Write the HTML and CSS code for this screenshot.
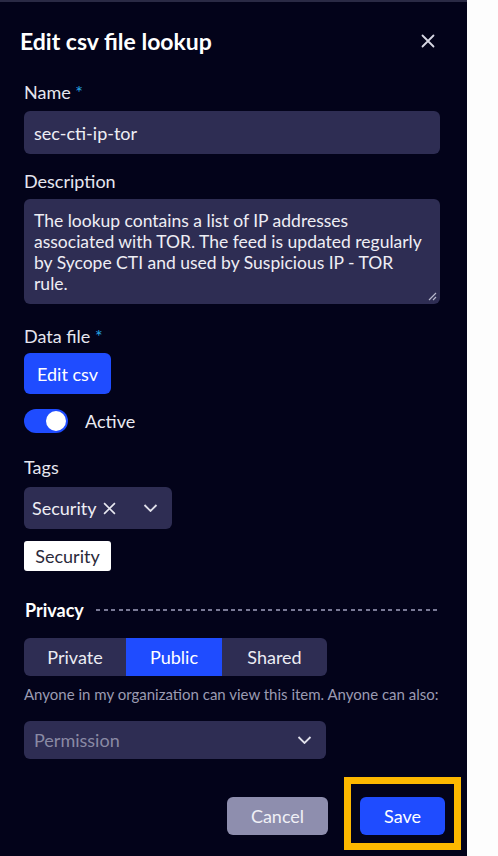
FILE: index.html
```html
<!DOCTYPE html>
<html lang="en">
<head>
<meta charset="utf-8">
<title>Edit csv file lookup</title>
<link rel="stylesheet" href="styles.css">
</head>
<body>
<div class="page">
  <section class="panel">
    <header class="head">
      <h1 class="title">Edit csv file lookup</h1>
      <button class="close" aria-label="Close">
        <svg width="14" height="14" viewBox="0 0 14 14"><path d="M1.5 1.5 L12.5 12.5 M12.5 1.5 L1.5 12.5" stroke="#d8d8e4" stroke-width="1.8" stroke-linecap="round"/></svg>
      </button>
    </header>

    <label class="label l-name">Name <span class="req">*</span></label>
    <div class="input name-input">sec-cti-ip-tor</div>

    <label class="label l-desc">Description</label>
    <div class="input textarea">The lookup contains a list of IP addresses<br>associated with TOR. The feed is updated regularly<br>by Sycope CTI and used by Suspicious IP - TOR<br>rule.
      <svg class="grip" width="10" height="10" viewBox="0 0 10 10"><path d="M9 2 L2 9 M9 6 L6 9" stroke="#b8b8cc" stroke-width="1.2"/></svg>
    </div>

    <label class="label l-data">Data file <span class="req">*</span></label>
    <button class="btn btn-blue edit-csv">Edit csv</button>

    <div class="toggle-row">
      <span class="toggle"><span class="knob"></span></span>
      <span class="toggle-text">Active</span>
    </div>

    <label class="label l-tags">Tags</label>
    <div class="input tag-select">
      <span class="tag-val">Security</span>
      <svg class="tag-x" width="13" height="13" viewBox="0 0 12 12"><path d="M1 1 L11 11 M11 1 L1 11" stroke="#e8e8f0" stroke-width="1.5"/></svg>
      <svg class="chev" width="15" height="8" viewBox="0 0 14 8"><path d="M1 1 L7 7 L13 1" fill="none" stroke="#e0e0ea" stroke-width="1.8"/></svg>
    </div>
    <div class="chip">Security</div>

    <div class="privacy">
      <span class="privacy-title">Privacy</span>
      <span class="dash"></span>
    </div>

    <div class="seg">
      <span class="seg-item s-private">Private</span>
      <span class="seg-item s-public active">Public</span>
      <span class="seg-item s-shared">Shared</span>
    </div>

    <p class="hint">Anyone in my organization can view this item. Anyone can also:</p>

    <div class="input perm">
      <span class="placeholder">Permission</span>
      <svg class="chev" width="15" height="8" viewBox="0 0 14 8"><path d="M1 1 L7 7 L13 1" fill="none" stroke="#e0e0ea" stroke-width="1.8"/></svg>
    </div>

    <footer class="foot">
      <button class="btn btn-cancel">Cancel</button>
      <button class="btn btn-blue btn-save">Save</button>
      <span class="highlight"></span>
    </footer>
  </section>
</div>
</body>
</html>
```

FILE: styles.css
```css
* { box-sizing: border-box; }
html, body { margin: 0; padding: 0; background: #fdfdfd; }
body { font-family: Lato, "Noto Sans", "Liberation Sans", sans-serif; color: #e9e9f2; }

.page { width: 498px; height: 856px; }

.panel {
  width: 467px;
  height: 856px;
  background: #03031a;
  border-top: 2px solid #2a2a45;
  padding: 26px 27px 0 24px;
  display: flex;
  flex-direction: column;
  align-items: flex-start;
}

.head {
  width: 420px;
  margin-left: -4px;
  display: flex;
  align-items: center;
  justify-content: space-between;
  height: 26px;
}
.title {
  margin: 0;
  font-size: 23px;
  line-height: 26px;
  font-weight: 700;
  color: #ffffff;
}
.close {
  background: none; border: 0; padding: 0; margin-right: 5px;
  width: 14px; height: 14px; display: flex;
}

.label {
  font-size: 18px;
  line-height: 20px;
  color: #e6e6ef;
  display: block;
}
.req { color: #27a7e4; }
.l-name { margin-top: 28px; }
.l-desc { margin-top: 17px; }
.l-data { margin-top: 22px; }
.l-tags { margin-top: 24px; }

.input {
  background: #2e2d53;
  border-radius: 6px;
  font-size: 18px;
  color: #eeeef5;
}
.name-input {
  margin-top: 9px;
  width: 416px;
  height: 43px;
  padding: 0 10px;
  display: flex;
  align-items: center;
}
.textarea {
  margin-top: 8px;
  width: 416px;
  height: 105px;
  padding: 11px 4px 11px 10px;
  font-size: 17.5px;
  line-height: 21px;
  white-space: nowrap;
  position: relative;
}
.grip { position: absolute; right: 3px; bottom: 3px; }

.btn {
  border: 0;
  border-radius: 6px;
  font-family: inherit;
  font-size: 18px;
  color: #ffffff;
  cursor: pointer;
  padding: 0;
}
.btn-blue { background: #1f4cff; }
.edit-csv {
  margin-top: 7px;
  width: 87px;
  height: 41px;
}

.toggle-row {
  margin-top: 15px;
  display: flex;
  align-items: center;
  gap: 17px;
}
.toggle {
  width: 44px; height: 24px;
  background: #1f4cff;
  border-radius: 12px;
  display: flex;
  align-items: center;
  justify-content: flex-end;
  padding-right: 2px;
}
.knob { width: 20px; height: 20px; border-radius: 50%; background: #ffffff; }
.toggle-text { font-size: 18px; color: #ebebf3; }

.tag-select {
  margin-top: 10px;
  width: 148px;
  height: 42px;
  display: flex;
  align-items: center;
  padding: 0 14px 0 8px;
}
.tag-val { margin-right: 7px; }
.tag-x { margin-right: auto; }

.chip {
  margin-top: 12px;
  width: 87px;
  height: 30px;
  background: #ffffff;
  color: #2a2a3a;
  border-radius: 3px;
  font-size: 18px;
  display: flex;
  align-items: center;
  justify-content: center;
}

.privacy {
  margin-top: 29px;
  width: 416px;
  height: 20px;
  display: flex;
  align-items: center;
  gap: 12px;
  padding-left: 1px;
}
.privacy-title { font-size: 18px; font-weight: 700; color: #ffffff; }
.dash {
  flex: 1;
  height: 1.5px;
  background: repeating-linear-gradient(to right, #7a7a96 0 4px, transparent 4px 7.5px);
}

.seg {
  margin-top: 18px;
  display: flex;
  width: 303px;
  height: 38px;
  background: #2e2d53;
  border-radius: 6px;
  overflow: hidden;
}
.seg-item {
  display: flex; align-items: center; justify-content: center;
  font-size: 18px; color: #ececf4;
}
.s-private { width: 102px; }
.s-public { width: 96px; }
.s-shared { width: 105px; }
.seg-item.active { background: #1f4cff; color: #ffffff; }

.hint {
  margin: 9px 0 0;
  font-size: 15px;
  line-height: 18px;
  color: #9b9bb2;
}

.perm {
  margin-top: 18px;
  width: 302px;
  height: 38px;
  display: flex;
  align-items: center;
  justify-content: space-between;
  padding: 0 14px 0 10px;
}
.placeholder { color: #8a8aa4; }

.foot {
  margin-top: 38px;
  width: 421px;
  display: flex;
  justify-content: flex-end;
  gap: 32px;
  position: relative;
}
.btn-cancel {
  width: 101px; height: 38px;
  background: #8e8eae;
  color: #f0f0f6;
}
.btn-save { width: 85px; height: 38px; }
.highlight {
  position: absolute;
  right: -16px;
  top: -20px;
  width: 117px;
  height: 73px;
  border: 7px solid #fdb800;
}
```
